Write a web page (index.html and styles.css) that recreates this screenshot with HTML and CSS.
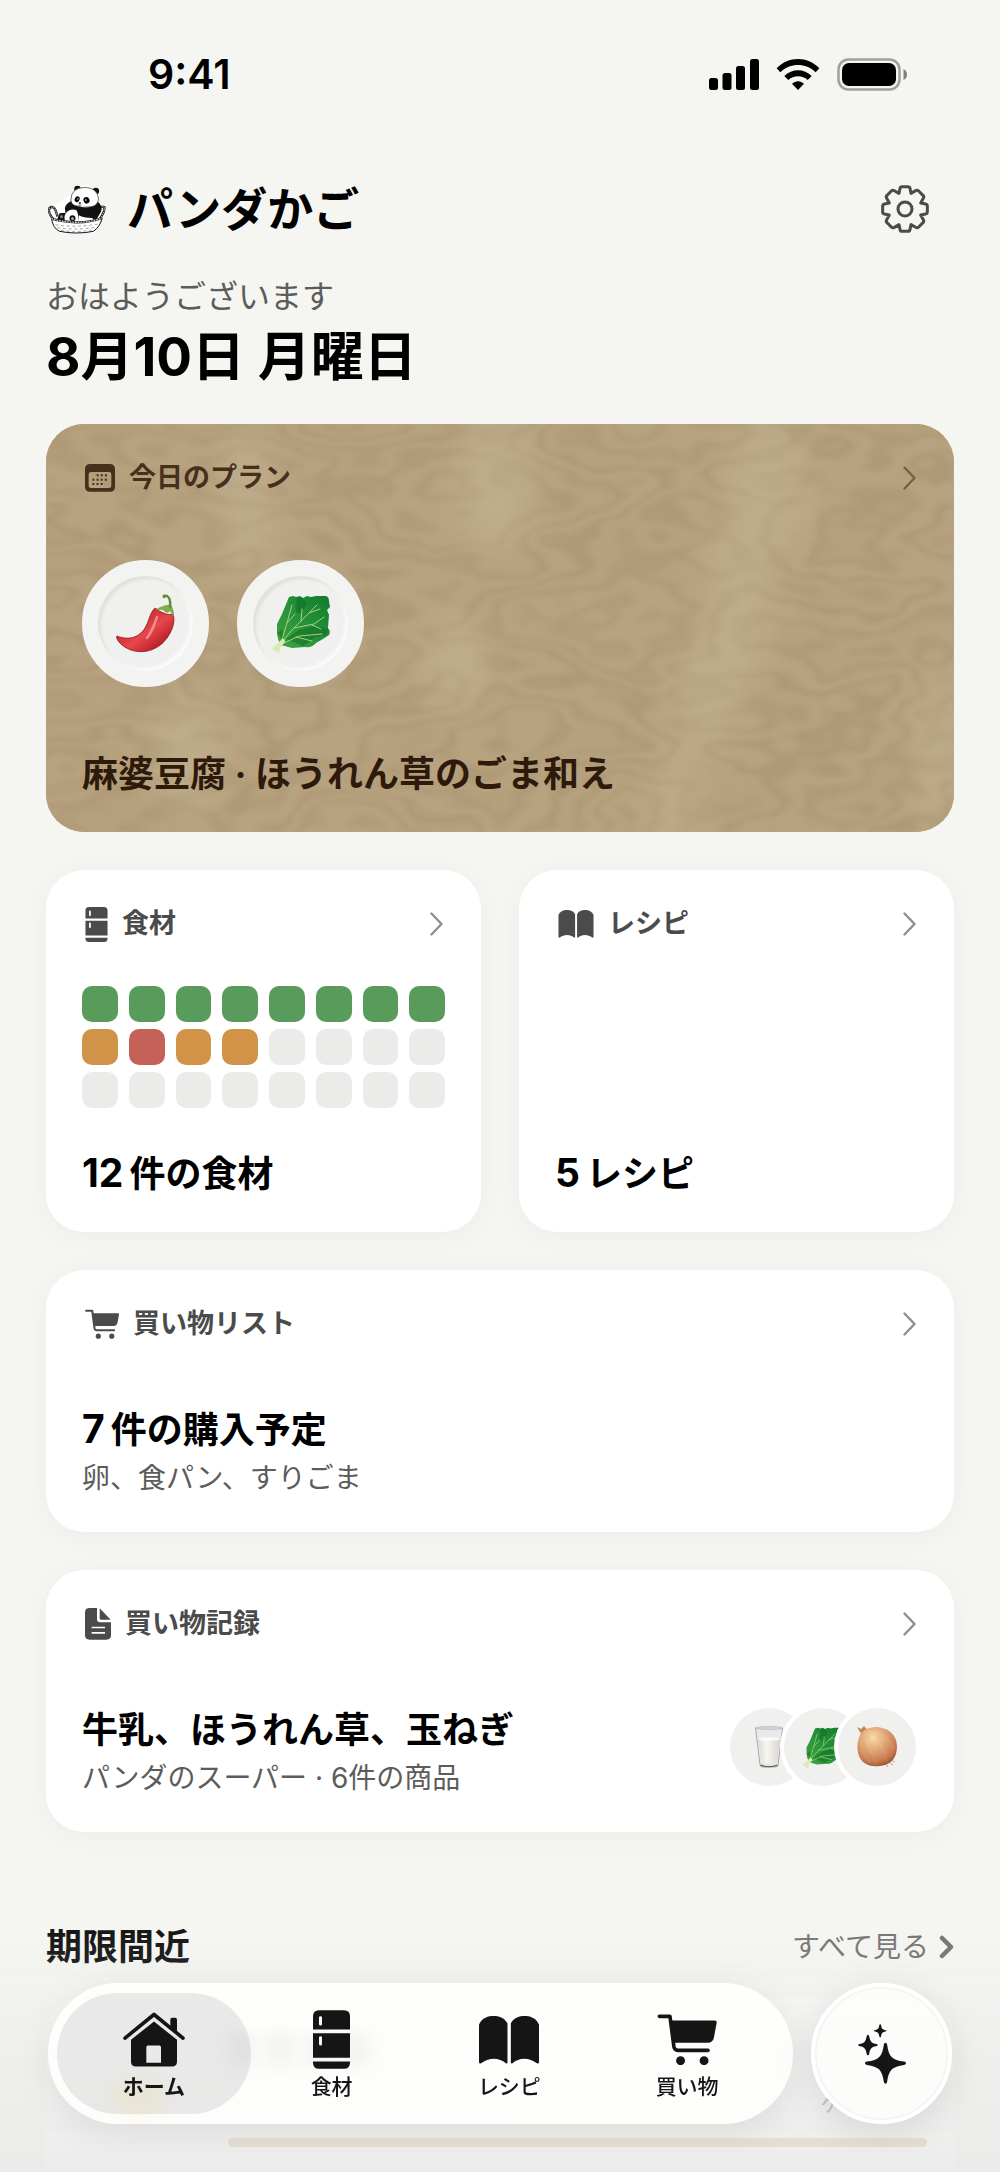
FILE: index.html
```html
<!DOCTYPE html>
<html lang="ja">
<head>
  <meta charset="UTF-8">
  <meta name="viewport" content="width=device-width, initial-scale=1">
  <title>パンダかご</title>
  <link rel="stylesheet" href="styles.css">
</head>
<body>

  <!-- shared icons -->
  <svg class="sprite" aria-hidden="true">
    <symbol id="chevron" viewBox="0 0 13 24">
      <path d="M1.5 1.5 L11.5 12 L1.5 22.5" fill="none" stroke="currentColor" stroke-width="2.400" stroke-linecap="round" stroke-linejoin="round"/>
    </symbol>
    <symbol id="fridge" viewBox="0 0 111 176">
      <path fill="currentColor" fill-rule="evenodd" d="M18 0 H93 Q111 0 111 18 V58 H0 V18 Q0 0 18 0Z M18 22 V42 Q18 46 22.500 46 Q27 46 27 42 V22 Q27 18 22.500 18 Q18 18 18 22Z M0 69 H111 V143 H0Z M18 82 V102 Q18 106 22.500 106 Q27 106 27 102 V82 Q27 78 22.500 78 Q18 78 18 82Z M0 154 H111 V158 Q111 176 93 176 H18 Q0 176 0 158Z"/>
    </symbol>
    <symbol id="book" viewBox="0 0 179 143">
      <path fill="currentColor" d="M0 26 C12 -8 70 -9 85 22 V138 Q85 143 80 141 C60 122 28 123 6 141 Q0 143 0 137Z"/>
      <path fill="currentColor" d="M179 26 C167 -8 109 -9 95 22 V138 Q95 143 100 141 C119 122 151 123 173 141 Q179 143 179 137Z"/>
    </symbol>
    <symbol id="cart" viewBox="0 0 179 154">
      <path fill="none" stroke="currentColor" stroke-width="11" stroke-linecap="round" stroke-linejoin="round" d="M6 7 H38 L50 99 Q52 110 62 110 H153"/>
      <path fill="currentColor" d="M42 20 H173 Q180 20 179 27 L171 70 Q168 86 152 87 H50Z"/>
      <circle cx="70" cy="141" r="13.500" fill="currentColor"/>
      <circle cx="141" cy="141" r="13.500" fill="currentColor"/>
    </symbol>
    <symbol id="spinach" viewBox="0 0 58 58">
      <path fill="url(#leaf)" d="M17 2 L21 1 L24 2 L28 1 L31 3 L35 1 L39 2 L44 1 L54 1 Q57 2 57 6 L58 12 L55 15 L57 20 L56 33 Q59 36 57 40 L51 44 L44 48 Q40 53 33 52 L20 53 L9 50 Q5 44 5 37 L5 29 L8 23 L10 19 Z"/>
      <path fill="#0e6e25" opacity=".55" d="M25 3 L29 2 L35 8 L29 19 L24 17Z M14 44 L27 35 L44 31 L56 34 L55 40 L44 42 L31 51 L20 46Z M5 38 L10 34 L12 46Z"/>
      <path fill="none" stroke="#a5d180" stroke-width="1" stroke-linecap="round" d="M4 54 L20 35 L45 10 M9 48 L15 28 L20 10 M8 50 L27 41 L50 39 M22 33 L42 29 L52 22 M29 26 L30 14 M37 18 L48 14 M15 28 L23 19 M24 42 L40 46 M40 30 L49 34"/>
      <path fill="#d9ecb4" d="M0 53 Q5 50 10 44 Q13 43 13 47 Q8 52 7 58 Q2 57 0 53Z"/>
    </symbol>
    <defs>
      <linearGradient id="leaf" x1="0" y1="1" x2="1" y2="0">
        <stop offset="0" stop-color="#3fa53f"/>
        <stop offset=".5" stop-color="#26913a"/>
        <stop offset="1" stop-color="#127c2c"/>
      </linearGradient>
      <linearGradient id="chiliRed" x1="0" y1="0" x2="1" y2="1">
        <stop offset=".25" stop-color="#c3272c"/>
        <stop offset=".55" stop-color="#e8464a"/>
        <stop offset=".9" stop-color="#a5141c"/>
      </linearGradient>
      <radialGradient id="onionSkin" cx=".4" cy=".28" r=".75">
        <stop offset="0" stop-color="#f8dca6"/>
        <stop offset=".4" stop-color="#e2a878"/>
        <stop offset=".8" stop-color="#c77b4f"/>
        <stop offset="1" stop-color="#9c5634"/>
      </radialGradient>
      <linearGradient id="milkFill" x1="0" x2="1">
        <stop offset="0" stop-color="#dddad4"/>
        <stop offset=".4" stop-color="#f8f6f1"/>
        <stop offset="1" stop-color="#d8d4cd"/>
      </linearGradient>
    </defs>
  </svg>

  <div class="statusbar">
    <span class="time">9:41</span>
    <div class="status-icons">
      <svg width="50" height="33" viewBox="0 0 50 33" aria-hidden="true">
        <rect x="0" y="20" width="9" height="12" rx="2.500"/>
        <rect x="13.500" y="15" width="9" height="17" rx="2.500"/>
        <rect x="27" y="8" width="9" height="24" rx="2.500"/>
        <rect x="41" y="1" width="9" height="31" rx="2.500"/>
      </svg>
      <svg width="44" height="33" viewBox="0 0 132 99" aria-hidden="true">
        <path d="M2 31 C38 -6 94 -6 130 31 L119 43 C89 14 43 14 13 43Z"/>
        <path d="M25 54 C48 31 84 31 107 54 L95 66 C79 51 53 51 37 66Z"/>
        <path d="M48 77 C59 67 73 67 84 77 L66 96Z"/>
      </svg>
      <svg width="71" height="33" viewBox="0 0 71 33" aria-hidden="true">
        <rect x="1.500" y="1.500" width="61" height="30" rx="10" fill="none" stroke="#a0a09e" stroke-width="2.500"/>
        <rect x="5" y="5" width="54" height="23" rx="7"/>
        <path d="M66.500 11 Q70 12.500 70 16.500 Q70 20.500 66.500 22Z" fill="#80807e"/>
      </svg>
    </div>
  </div>

  <main>
    <header class="topbar">
      <svg class="logo" width="61" height="49" viewBox="22 43 182 147" aria-hidden="true">
        <g stroke="#fff" stroke-width="8" fill="#fff">
          <ellipse cx="137" cy="79" rx="41" ry="31"/>
          <path d="M32 118 L44 160 L66 184 H160 L184 155 L196 118 L165 80 H90Z"/>
        </g>
        <path fill="none" stroke="#222" stroke-width="7" d="M44 146 Q26 126 32 112 Q42 104 50 118 L56 138 M182 146 Q198 124 197 110 Q186 104 180 118 L174 138"/>
        <path fill="none" stroke="#ddd" stroke-width="3" stroke-dasharray="4 3" d="M44 146 Q26 126 32 112 Q42 104 50 118 L56 138 M182 146 Q198 124 197 110 Q186 104 180 118 L174 138"/>
        <!-- body and arms -->
        <path fill="#111" d="M96 92 Q82 98 78 112 L80 126 L62 128 L54 148 H172 L180 134 Q196 116 182 98 L170 88Z"/>
        <path fill="#fff" d="M84 124 Q95 114 112 118 Q120 128 118 150 H78 Q74 134 84 124Z"/>
        <path fill="#fff" d="M120 134 Q134 142 160 142 L168 150 H118Z"/>
        <circle cx="101" cy="143" r="9" fill="#111"/>
        <circle cx="101" cy="144" r="4" fill="#bbb"/>
        <circle cx="68" cy="138" r="5" fill="#777"/>
        <!-- head -->
        <circle cx="116" cy="55" r="10" fill="#111"/>
        <circle cx="171" cy="61" r="10" fill="#111"/>
        <path fill="#fff" stroke="#222" stroke-width="2" d="M96 88 Q96 52 138 50 Q176 52 179 84 Q178 104 158 108 Q130 114 106 104 Q96 98 96 88Z"/>
        <ellipse cx="115" cy="86" rx="7" ry="9" transform="rotate(25 115 86)"/>
        <ellipse cx="143" cy="89" rx="9" ry="10" transform="rotate(-25 143 89)"/>
        <circle cx="117" cy="85" r="2" fill="#fff"/>
        <circle cx="141" cy="88" r="2.500" fill="#fff"/>
        <ellipse cx="123" cy="97" rx="4" ry="2.500"/>
        <path fill="none" stroke="#222" stroke-width="1.500" d="M123 99 V103 M118 104 Q123 106 128 103"/>
        <!-- basket -->
        <path fill="#fff" stroke="#111" stroke-width="3" d="M38 144 Q42 172 62 182 Q112 192 164 182 Q184 168 190 142 Q150 156 112 155 Q70 154 38 144Z"/>
        <path fill="none" stroke="#222" stroke-width="7" d="M38 144 Q70 154 112 155 Q150 156 190 142"/>
        <path fill="none" stroke="#ddd" stroke-width="3.500" stroke-dasharray="5 3" d="M38 144 Q70 154 112 155 Q150 156 190 142"/>
        <path fill="none" stroke="#777" stroke-width="2" stroke-dasharray="9 8" d="M50 162 Q110 172 180 160 M56 171 Q110 180 172 169 M66 179 Q112 186 158 178"/>
      </svg>
      <h1>パンダかご</h1>
      <button class="settings" type="button" aria-label="設定">
        <svg width="48" height="48" viewBox="-72 -72 144 144" fill="none" stroke="currentColor" stroke-width="9" stroke-linejoin="round" aria-hidden="true">
          <path d="M-9 -67 H9 Q14 -67 15 -62 L18 -47 L32 -55 Q37 -58 41 -54 L54 -41 Q58 -37 55 -32 L47 -18 L62 -15 Q67 -14 67 -9 V9 Q67 14 62 15 L47 18 L55 32 Q58 37 54 41 L41 54 Q37 58 32 55 L18 47 L15 62 Q14 67 9 67 H-9 Q-14 67 -15 62 L-18 47 L-32 55 Q-37 58 -41 54 L-54 41 Q-58 37 -55 32 L-47 18 L-62 15 Q-67 14 -67 9 V-9 Q-67 -14 -62 -15 L-47 -18 L-55 -32 Q-58 -37 -54 -41 L-41 -54 Q-37 -58 -32 -55 L-18 -47 L-15 -62 Q-14 -67 -9 -67Z"/>
          <circle r="21"/>
        </svg>
      </button>
    </header>

    <p class="greeting">おはようございます</p>
    <h2 class="date">8月10日 月曜日</h2>

    <div class="cards">
      <a class="card plan" href="#plan">
        <svg class="wood" viewBox="0 0 908 408" preserveAspectRatio="xMidYMid slice" aria-hidden="true">
          <defs>
            <filter id="grain" x="0" y="0" width="100%" height="100%" color-interpolation-filters="sRGB">
              <feTurbulence type="fractalNoise" baseFrequency="0.004 0.008" numOctaves="4" seed="8"/>
              <feColorMatrix values="0 0 0 0 .62  0 0 0 0 .53  0 0 0 0 .39  1 0 0 0 0"/>
              <feComponentTransfer>
                <feFuncA type="table" tableValues="0 0 .3 0 0 .35 0 0 .3 0 0 .35 .1 0 .4 0 0 .35 .1 0 .35 0 0 .3 0 0 .3 0 0 .3 0"/>
              </feComponentTransfer>
              <feGaussianBlur stdDeviation="2"/>
            </filter>
            <filter id="soft" x="-50%" y="-50%" width="200%" height="200%">
              <feGaussianBlur stdDeviation="18"/>
            </filter>
          </defs>
          <rect width="908" height="408" fill="#b8a380"/>
          <rect width="908" height="408" filter="url(#grain)"/>
          <g fill="#cbbd9d" opacity=".4" filter="url(#soft)">
            <ellipse cx="200" cy="80" rx="26" ry="75"/>
            <ellipse cx="450" cy="60" rx="40" ry="70"/>
            <ellipse cx="722" cy="60" rx="40" ry="70"/>
            <ellipse cx="695" cy="160" rx="32" ry="90"/>
            <ellipse cx="660" cy="270" rx="34" ry="60"/>
            <ellipse cx="632" cy="380" rx="20" ry="60"/>
            <ellipse cx="410" cy="240" rx="30" ry="50"/>
            <ellipse cx="140" cy="330" rx="34" ry="60"/>
            <ellipse cx="890" cy="330" rx="20" ry="80"/>
          </g>
        </svg>
        <div class="card-head">
          <svg width="30" height="28" viewBox="0 0 90 84" aria-hidden="true">
            <path fill="currentColor" fill-rule="evenodd" d="M16 0 H74 Q90 0 90 16 V68 Q90 83 74 83 H16 Q0 83 0 68 V16 Q0 0 16 0Z M18 24 Q11 24 11 31 V65 Q11 72 18 72 H72 Q79 72 79 65 V31 Q79 24 72 24Z"/>
            <path stroke="currentColor" stroke-width="6" stroke-dasharray="6 6.500" d="M35 34 H72 M22 47 H72 M22 60 H60"/>
          </svg>
          <span>今日のプラン</span>
          <svg class="chevron" width="13" height="24" aria-hidden="true"><use href="#chevron"/></svg>
        </div>
        <div class="plates">
          <span class="plate">
            <svg width="59" height="60" viewBox="0 0 59 60" aria-hidden="true">
              <path fill="url(#chiliRed)" stroke="#8f141a" stroke-width=".8" d="M39 14 C33 19 33 31 26 38 C18 46 8 45 1 42 C-1 45 6 53 15 56 C30 61 44 54 51 44 C58 34 59 26 57 20 C52 22 44 18 39 14Z"/>
              <path fill="none" stroke="#fff" stroke-opacity=".4" stroke-width="2.500" stroke-linecap="round" d="M41 23 C38 32 36 38 31 44"/>
              <path fill="#7fae4a" d="M40 15 Q46 12 50 11 L55 11 Q58 15 58 22 Q55 20 54 17 Q52 20 49 18 Q47 15 44 16 Q42 16 40 15Z"/>
              <path fill="none" stroke="#5f8d38" stroke-width="2.500" stroke-linecap="round" d="M48 3 Q47 1 51 2 Q55 4 54 13"/>
            </svg>
          </span>
          <span class="plate">
            <svg width="58" height="58" aria-hidden="true"><use href="#spinach"/></svg>
          </span>
        </div>
        <strong class="card-title">麻婆豆腐 · ほうれん草のごま和え</strong>
      </a>

      <div class="pair">
        <a class="card" href="#ingredients">
          <div class="card-head">
            <svg width="23" height="35" aria-hidden="true"><use href="#fridge"/></svg>
            <span>食材</span>
            <svg class="chevron" width="13" height="24" aria-hidden="true"><use href="#chevron"/></svg>
          </div>
          <div class="stock">
            <i class="fresh"></i><i class="fresh"></i><i class="fresh"></i><i class="fresh"></i><i class="fresh"></i><i class="fresh"></i><i class="fresh"></i><i class="fresh"></i>
            <i class="soon"></i><i class="expired"></i><i class="soon"></i><i class="soon"></i><i></i><i></i><i></i><i></i>
            <i></i><i></i><i></i><i></i><i></i><i></i><i></i><i></i>
          </div>
          <strong class="card-title"><span class="count">12</span>件の食材</strong>
        </a>

        <a class="card" href="#recipes">
          <div class="card-head">
            <svg width="36" height="28" aria-hidden="true"><use href="#book"/></svg>
            <span>レシピ</span>
            <svg class="chevron" width="13" height="24" aria-hidden="true"><use href="#chevron"/></svg>
          </div>
          <strong class="card-title bottom"><span class="count">5</span>レシピ</strong>
        </a>
      </div>

      <a class="card" href="#list">
        <div class="card-head">
          <svg width="34" height="30" aria-hidden="true"><use href="#cart"/></svg>
          <span>買い物リスト</span>
          <svg class="chevron" width="13" height="24" aria-hidden="true"><use href="#chevron"/></svg>
        </div>
        <div class="summary">
          <div>
            <strong class="card-title"><span class="count">7</span>件の購入予定</strong>
            <span class="sub">卵、食パン、すりごま</span>
          </div>
        </div>
      </a>

      <a class="card" href="#history">
        <div class="card-head">
          <svg width="26" height="32" viewBox="0 0 78 96" aria-hidden="true">
            <path fill="currentColor" fill-rule="evenodd" d="M14 0 H36 V34 Q36 43 45 43 H78 V82 Q78 95 64 95 H14 Q0 95 0 82 V13 Q0 0 14 0Z M20 56 V61 H60 V56Z M20 72 V77 H60 V72Z"/>
            <path fill="currentColor" d="M44 1 L77 35 H48 Q44 35 44 31Z"/>
          </svg>
          <span>買い物記録</span>
          <svg class="chevron" width="13" height="24" aria-hidden="true"><use href="#chevron"/></svg>
        </div>
        <div class="summary">
          <div>
            <strong class="card-title">牛乳、ほうれん草、玉ねぎ</strong>
            <span class="sub">パンダのスーパー · 6件の商品</span>
          </div>
          <div class="bubbles">
            <span class="bubble">
              <svg width="28" height="42" viewBox="0 0 28 42" aria-hidden="true">
                <path fill="#e9e9e9" stroke="#a9a9a9" stroke-width="1" d="M.5 2 L5 39 Q5 41 8 41 H20 Q23 41 23 39 L27.500 2Z"/>
                <path fill="url(#milkFill)" d="M3 13 L6 36 Q14 39 22 36 L25 13Z"/>
                <ellipse cx="14" cy="13" rx="11" ry="1.800" fill="#fbfaf7"/>
                <ellipse cx="14" cy="2" rx="13.500" ry="1.500" fill="#d4d4d4" stroke="#b0b0b0" stroke-width=".6"/>
                <path stroke="#555" stroke-width="1.200" fill="none" d="M5.500 39 Q14 42.500 22.500 39"/>
              </svg>
            </span>
            <span class="bubble">
              <svg width="41" height="41" aria-hidden="true"><use href="#spinach"/></svg>
            </span>
            <span class="bubble">
              <svg width="42" height="42" viewBox="0 0 42 42" aria-hidden="true">
                <path fill="#c08850" d="M1 1 L5 3 L8 0 L12 5 L7 10 L4 6Z"/>
                <path fill="none" stroke="#c9a184" stroke-width="1" d="M35 34 L39 36 M33 36 L37 39 M30 38 L32 41"/>
                <path fill="url(#onionSkin)" d="M5 7 Q12 0 22 1 Q40 4 41 20 Q41 38 24 40 Q6 42 2 27 Q0 16 5 7Z"/>
                <path fill="none" stroke="#fff0c8" stroke-opacity=".15" stroke-width="1" d="M6 7 Q1 22 14 37 M7 6 Q13 22 21 39 M8 6 Q28 14 31 36 M8 5 Q30 4 38 24"/>
              </svg>
            </span>
          </div>
        </div>
      </a>
    </div>

    <section>
      <div class="section-head">
        <h2>期限間近</h2>
        <a href="#expiring">すべて見る
          <svg width="15" height="24" viewBox="0 0 15 24" aria-hidden="true"><path d="M3 3 L12 12 L3 21" fill="none" stroke="currentColor" stroke-width="4.500" stroke-linecap="round" stroke-linejoin="round"/></svg>
        </a>
      </div>
      <div class="expiring">
        <span class="thumb"></span>
        <div class="expiring-body">
          <span class="name"></span>
          <span class="shop">ケン</span>
          <span class="life"></span>
        </div>
      </div>
    </section>
  </main>

  <div class="dock">
    <nav class="tabs">
      <a class="tab active" href="#home">
        <svg width="62" height="55" viewBox="0 0 186 164" aria-hidden="true">
          <path fill="none" stroke="currentColor" stroke-width="11" stroke-linecap="round" stroke-linejoin="round" d="M6 78 L93 7 L180 78"/>
          <path fill="currentColor" d="M142 50 V22 Q142 17 147 17 H157 Q162 17 162 22 V62Z"/>
          <path fill="currentColor" fill-rule="evenodd" d="M24 83 L93 28 L162 83 V148 Q162 163 147 163 H39 Q24 163 24 148Z M75 100 Q70 100 70 105 V152 H114 V105 Q114 100 109 100Z"/>
        </svg>
        ホーム
      </a>
      <a class="tab" href="#ingredients">
        <svg width="37" height="59" aria-hidden="true"><use href="#fridge"/></svg>
        食材
      </a>
      <a class="tab" href="#recipes">
        <svg width="60" height="48" aria-hidden="true"><use href="#book"/></svg>
        レシピ
      </a>
      <a class="tab" href="#list">
        <svg width="60" height="51" aria-hidden="true"><use href="#cart"/></svg>
        買い物
      </a>
    </nav>
    <button class="assist" type="button" aria-label="アシスタント">
      <svg width="48" height="60" viewBox="0 0 145 180" aria-hidden="true">
        <path fill="currentColor" d="M83 56 Q87 56 88 62 C93 98 103 108 139 113 Q145 114 145 118 Q145 122 139 123 C103 128 93 138 88 174 Q87 180 83 180 Q79 180 78 174 C73 138 63 128 27 123 Q21 122 21 118 Q21 114 27 113 C63 108 73 98 78 62 Q79 56 83 56Z"/>
        <path fill="currentColor" d="M30 32 Q33 32 34 37 C37 53 41 57 56 60 Q60 61 60 63 Q60 65 56 66 C41 69 37 73 34 89 Q33 94 30 94 Q27 94 26 89 C23 73 19 69 4 66 Q0 65 0 63 Q0 61 4 60 C19 57 23 53 26 37 Q27 32 30 32Z"/>
        <path fill="currentColor" d="M67 0 Q69 0 70 4 C71 14 74 16 83 18 Q87 19 87 20 Q87 21 83 22 C74 24 71 26 70 36 Q69 40 67 40 Q65 40 64 36 C63 26 60 24 51 22 Q47 21 47 20 Q47 19 51 18 C60 16 63 14 64 4 Q65 0 67 0Z"/>
      </svg>
    </button>
  </div>

</body>
</html>
```
FILE: styles.css
```css
* {
  box-sizing: border-box;
}
body {
  margin: 0;
  min-height: 100vh;
  background: #f5f6f1;
  color: #000;
  font-family: Inter, "Noto Sans CJK JP", sans-serif;
}
h1, h2, p {
  margin: 0;
}
a {
  color: inherit;
  text-decoration: none;
}
button {
  padding: 0;
  border: none;
  background: none;
  cursor: pointer;
}
svg {
  flex: none;
}
.sprite {
  position: absolute;
  width: 0;
  height: 0;
}

/* status bar */
.statusbar {
  display: flex;
  align-items: center;
  justify-content: space-between;
  height: 104px;
  padding: 44px 92px 0 148px;
}
.time {
  font-size: 41px;
  font-weight: 600;
}
.status-icons {
  display: flex;
  align-items: center;
  gap: 17px;
}

main {
  padding: 0 46px;
}

/* header */
.topbar {
  display: flex;
  align-items: center;
  gap: 20px;
  height: 60px;
  margin-top: 75px;
}
.topbar h1 {
  font-size: 46px;
  line-height: 60px;
}
.settings {
  display: flex;
  margin-left: auto;
  padding: 6px 25px;
  color: #4b4b4b;
}
.greeting {
  margin-top: 38px;
  color: #5c5c5a;
  font-size: 32px;
  line-height: 40px;
}
.date {
  margin-top: 6px;
  font-size: 53px;
  line-height: 68px;
}

/* cards */
.cards {
  display: flex;
  flex-direction: column;
  gap: 38px;
  margin-top: 33px;
}
.card {
  display: flex;
  flex-direction: column;
  padding: 36px;
  border-radius: 38px;
  background: #fff;
  box-shadow: 0 4px 30px rgba(0, 0, 0, 0.04);
}
.card-head {
  display: flex;
  align-items: center;
  gap: 14px;
  height: 36px;
  padding: 0 2px 0 3px;
  color: #4b4b4b;
  font-size: 27px;
  font-weight: 700;
  line-height: 36px;
}
.chevron {
  margin-left: auto;
  color: #8e8e8e;
}
.card-title {
  display: block;
  font-size: 36px;
  font-weight: 700;
  line-height: 44px;
}
.card-title.bottom {
  margin-top: auto;
}
.count {
  margin-right: 6px;
  font-size: 39px;
  line-height: 1;
}
.sub {
  display: block;
  margin-top: 8px;
  color: #5c5c5a;
  font-size: 28px;
  line-height: 36px;
}
.pair {
  display: grid;
  grid-template-columns: 1fr 1fr;
  gap: 38px;
}
.summary {
  display: flex;
  align-items: flex-start;
  justify-content: space-between;
  margin-top: 66px;
}

/* today's plan */
.plan {
  position: relative;
  overflow: hidden;
  background: #b8a380;
  color: #2e1a0a;
  box-shadow: none;
}
.plan > * {
  position: relative;
}
.plan .wood {
  position: absolute;
  inset: 0;
  width: 100%;
  height: 100%;
}
.plan .card-head {
  color: #46301c;
}
.plan .chevron {
  color: #79613f;
}
.plates {
  display: flex;
  gap: 28px;
  margin: 64px 0 65px;
}
.plate {
  display: flex;
  align-items: center;
  justify-content: center;
  width: 127px;
  height: 127px;
  border: 16px solid #f3f3f2;
  border-radius: 50%;
  background: #f0f0ef;
  box-shadow: inset 3px 3px 3px #e0e0df, inset -3px -3px 3px #fafafa;
}

/* stock squares */
.stock {
  display: grid;
  grid-template-columns: repeat(8, 1fr);
  gap: 7px 11px;
  margin: 44px 0;
}
.stock i {
  height: 36px;
  border-radius: 10px;
  background: #ebebea;
}
.stock .fresh {
  background: #599b5b;
}
.stock .soon {
  background: #d19347;
}
.stock .expired {
  background: #c4625a;
}

/* purchase bubbles */
.bubbles {
  display: flex;
  padding-right: 2px;
}
.bubble {
  display: flex;
  align-items: center;
  justify-content: center;
  width: 78px;
  height: 78px;
  border-radius: 50%;
  background: #f0f0ef;
  box-shadow: 0 0 0 4px #fff;
}
.bubble + .bubble {
  margin-left: -24px;
}

/* expiring soon */
.section-head {
  display: flex;
  align-items: center;
  justify-content: space-between;
  margin-top: 93px;
}
.section-head h2 {
  color: #161616;
  font-size: 36px;
  line-height: 44px;
}
.section-head a {
  display: flex;
  align-items: center;
  gap: 10px;
  color: #767675;
  font-size: 28px;
  line-height: 36px;
}
.expiring {
  display: flex;
  gap: 62px;
  margin-top: 28px;
  padding: 36px 27px 25px 64px;
  border-radius: 38px 38px 0 0;
  background: #f8f8f6;
}
.thumb {
  width: 56px;
  height: 36px;
  margin-top: 46px;
  border-radius: 50%;
  background: #ffc400;
}
.expiring-body {
  display: flex;
  flex: 1;
  flex-direction: column;
}
.name {
  width: 144px;
  height: 34px;
  background: repeating-linear-gradient(90deg, #999 0 28px, transparent 28px 38px);
}
.shop {
  align-self: flex-end;
  margin: 26px 67px 21px 0;
  color: #b4b4b3;
  font-size: 20px;
  line-height: 24px;
}
.life {
  height: 9px;
  border-radius: 5px;
  background: #ecdccb;
}

/* bottom dock, floats over the page */
.dock {
  position: fixed;
  inset: auto 0 0 0;
  display: flex;
  gap: 18px;
  padding: 56px 48px 48px;
  background: linear-gradient(rgba(225, 225, 226, 0), rgba(222, 222, 223, 0.45));
}
.tabs {
  display: flex;
  flex: 1;
  padding: 10px 9px;
  border-radius: 71px;
  background: rgba(255, 255, 253, 0.86);
  box-shadow: 0 8px 36px rgba(0, 0, 0, 0.08);
  backdrop-filter: blur(8px);
}
.tab {
  display: flex;
  flex: 1;
  flex-direction: column;
  align-items: center;
  justify-content: flex-end;
  height: 121px;
  padding: 14px 0 12px;
  border-radius: 61px;
  color: #151515;
  font-size: 21px;
  font-weight: 500;
  line-height: 30px;
}
.tab + .tab {
  margin-left: -16px;
}
.tab svg {
  margin: auto 0;
}
.tab.active {
  background: rgba(140, 140, 145, 0.18);
  font-weight: 700;
}
.assist {
  display: flex;
  align-items: center;
  justify-content: center;
  width: 141px;
  height: 141px;
  border: 4px solid #fff;
  border-radius: 50%;
  background: rgba(253, 253, 251, 0.92);
  box-shadow: 0 8px 36px rgba(0, 0, 0, 0.1), inset 0 0 3px rgba(0, 0, 0, 0.12);
  color: #151515;
  backdrop-filter: blur(8px);
}
```
